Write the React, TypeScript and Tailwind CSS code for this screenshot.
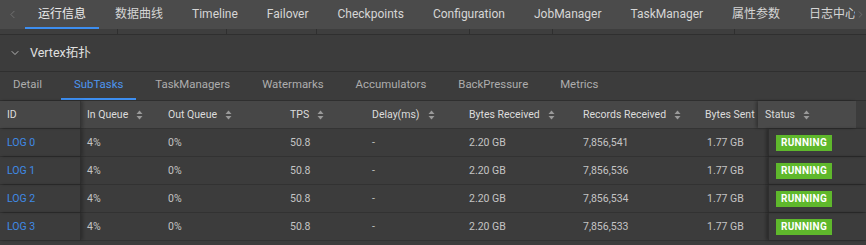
import { ChevronDown, ChevronLeft, ChevronRight } from 'lucide-react'

const topTabs = ['运行信息', '数据曲线', 'Timeline', 'Failover', 'Checkpoints', 'Configuration', 'JobManager', 'TaskManager', '属性参数', '日志中心']
const subTabs = ['Detail', 'SubTasks', 'TaskManagers', 'Watermarks', 'Accumulators', 'BackPressure', 'Metrics']

const columns = [
  { label: 'In Queue', w: 'w-[81px]' },
  { label: 'Out Queue', w: 'w-[122px]' },
  { label: 'TPS', w: 'w-[82px]' },
  { label: 'Delay(ms)', w: 'w-[97px]' },
  { label: 'Bytes Received', w: 'w-[114px]' },
  { label: 'Records Received', w: 'w-[122px]' },
]

const rows = [
  { id: 'LOG 0', records: '7,856,541' },
  { id: 'LOG 1', records: '7,856,536' },
  { id: 'LOG 2', records: '7,856,534' },
  { id: 'LOG 3', records: '7,856,533' },
]

function SortIcon() {
  return (
    <svg width="7" height="10" viewBox="0 0 7 10" className="shrink-0">
      <path d="M3.5 0.5 L6.5 4 L0.5 4 Z" fill="#9a9a9a" />
      <path d="M3.5 9.5 L6.5 6 L0.5 6 Z" fill="#9a9a9a" />
    </svg>
  )
}

export default function App() {
  return (
    <div className="w-[866px] h-[245px] overflow-hidden bg-[#3c3c3c] text-[#c4c4c4]" style={{ fontFamily: 'Roboto, "Noto Sans CJK SC", sans-serif' }}>
      {/* top nav */}
      <div className="h-[29px] bg-[#4b4b4b] flex items-stretch relative">
        <div className="w-[25px] shrink-0 flex items-center justify-center text-[#777]">
          <ChevronLeft size={13} strokeWidth={1.5} />
        </div>
        <div className="flex gap-[3px] flex-1 min-w-0">
          {topTabs.map((t, i) => (
            <div
              key={t}
              className={`px-[13px] shrink-0 flex items-center text-[12px] whitespace-nowrap border-b-2 ${i === 0 ? 'border-[#3d8ef0] text-[#ececec]' : 'border-transparent text-[#d6d6d6]'}`}
            >
              {t}
            </div>
          ))}
        </div>
        <div className="absolute right-0 top-0 h-full w-[11px] flex items-center justify-center text-[#777] bg-[#4b4b4b]">
          <ChevronRight size={11} strokeWidth={1.5} />
        </div>
      </div>

      {/* remnant strip */}
      <div className="h-[6px] bg-[#3e3e3e] border-b border-[#2f2f2f] flex">
        <div className="w-[118px] border-r border-[#2f2f2f]" />
        <div className="w-[109px] border-r border-[#2f2f2f]" />
        <div className="w-[90px] border-r border-[#2f2f2f]" />
        <div className="w-[153px] border-r border-[#2f2f2f]" />
        <div className="w-[83px] border-r border-[#2f2f2f]" />
        <div className="w-[182px] border-r border-[#2f2f2f]" />
        <div className="flex-1" />
      </div>

      {/* vertex section */}
      <div className="h-[37px] flex items-center gap-[9px] pl-[9px] border-b border-[#2f2f2f] text-[#e0e0e0] text-[12.5px]">
        <ChevronDown size={12} strokeWidth={1.6} className="text-[#d0d0d0]" />
        <span>Vertex拓扑</span>
      </div>

      {/* sub tabs */}
      <div className="h-[29px] flex gap-[6px] border-b border-[#2f2f2f]">
        {subTabs.map((t, i) => (
          <div
            key={t}
            className={`px-[13px] flex items-center text-[11.4px] border-b-2 ${i === 1 ? 'border-[#3d8ef0] text-[#4d95ef]' : 'border-transparent text-[#adadad]'}`}
          >
            {t}
          </div>
        ))}
      </div>

      {/* table */}
      <div className="text-[10.5px]">
        <div className="h-[28px] flex bg-[#474747] border-b border-[#343434] text-[#dcdcdc]">
          <div className="w-[81px] pl-[7px] flex items-center border-r border-[#343434] shadow-[2px_0_3px_rgba(0,0,0,0.25)]">ID</div>
          {columns.map((c) => (
            <div key={c.label} className={`${c.w} pl-[6px] flex items-center gap-[8px] whitespace-nowrap`}>
              {c.label}
              <SortIcon />
            </div>
          ))}
          <div className="w-[59px] pl-[6px] flex items-center whitespace-nowrap">Bytes Sent</div>
          <div className="w-[98px] pl-[7px] flex items-center gap-[8px] bg-[#4a4a4a] shadow-[-2px_0_3px_rgba(0,0,0,0.3)]">
            Status
            <SortIcon />
          </div>
          <div className="flex-1 bg-[#3c3c3c]" />
        </div>
        {rows.map((r) => (
          <div key={r.id} className="h-[28px] flex border-b border-[#323232]">
            <div className="w-[81px] pl-[7px] flex items-center text-[#3f8ae6] border-r border-[#2e2e2e] shadow-[2px_0_3px_rgba(0,0,0,0.25)]">{r.id}</div>
            <div className="w-[81px] pl-[6px] flex items-center">4%</div>
            <div className="w-[122px] pl-[6px] flex items-center">0%</div>
            <div className="w-[82px] pl-[6px] flex items-center">50.8</div>
            <div className="w-[97px] pl-[6px] flex items-center">-</div>
            <div className="w-[114px] pl-[6px] flex items-center">2.20 GB</div>
            <div className="w-[122px] pl-[6px] flex items-center">{r.records}</div>
            <div className="w-[69px] pl-[8px] flex items-center">1.77 GB</div>
            <div className="flex-1 pl-[7px] flex items-center border-l border-[#2e2e2e] shadow-[-2px_0_3px_rgba(0,0,0,0.3)]">
              <span className="bg-[#5fb82c] text-white font-bold text-[10px] tracking-[0.3px] px-[5px] h-[16px] flex items-center">RUNNING</span>
            </div>
          </div>
        ))}
      </div>
    </div>
  )
}
